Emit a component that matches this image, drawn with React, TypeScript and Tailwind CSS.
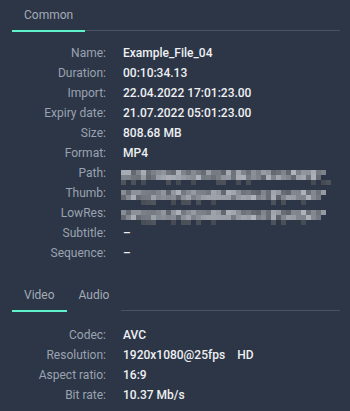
import React from 'react'

// pseudo-blurred path strings, drawn as pixel blocks
function Pixelated({ seed, width = 210 }: { seed: number; width?: number }) {
  const cells: React.ReactElement[] = []
  let s = seed
  const rand = () => {
    s = (s * 9301 + 49297) % 233280
    return s / 233280
  }
  const cols = Math.floor(width / 5)
  for (let r = 0; r < 3; r++) {
    for (let c = 0; c < cols; c++) {
      const v = rand()
      if (r === 2 && v > 0.18) continue
      const shade = r === 2 ? 70 + Math.floor(v * 60) : 95 + Math.floor(v * 80)
      const cut = c > cols - 3 && rand() > 0.5
      if (cut) continue
      cells.push(
        <rect
          key={r + '-' + c}
          x={c * 5}
          y={r * 5}
          width={5}
          height={5}
          fill={`rgb(${shade},${shade + 4},${shade + 12})`}
        />
      )
    }
  }
  return (
    <svg width={width} height={15} className="block" shapeRendering="crispEdges">
      {cells}
    </svg>
  )
}

interface Row {
  label: string
  value?: React.ReactNode
}

function Rows({ rows }: { rows: Row[] }) {
  return (
    <div className="flex flex-col">
      {rows.map((row) => (
        <div key={row.label} className="flex h-5 items-center">
          <div className="w-[106px] text-right text-[12px] text-[#9aa3b1]">{row.label}</div>
          <div className="ml-[17px] text-[12px] font-medium text-[#eef0f3]">{row.value}</div>
        </div>
      ))}
    </div>
  )
}

function Tabs({ tabs, active }: { tabs: string[]; active: number }) {
  return (
    <div className="flex pl-3 pr-[10px]">
      {tabs.map((t, i) => (
        <div
          key={t}
          className={
            'flex h-8 items-center px-3 pb-[1px] text-[12px] text-[#a3abb7] border-b-2 ' +
            (i === active ? 'border-[#5ef2ca]' : 'border-transparent')
          }
        >
          {t}
        </div>
      ))}
      <div className="flex-1 border-b border-[#4a5362] mb-[1px]" />
    </div>
  )
}

export default function App() {
  const common: Row[] = [
    { label: 'Name:', value: 'Example_File_04' },
    { label: 'Duration:', value: '00:10:34.13' },
    { label: 'Import:', value: '22.04.2022 17:01:23.00' },
    { label: 'Expiry date:', value: '21.07.2022 05:01:23.00' },
    { label: 'Size:', value: '808.68 MB' },
    { label: 'Format:', value: 'MP4' },
    { label: 'Path:', value: <div className="-ml-[2px] mt-[8px]"><Pixelated seed={17} width={210} /></div> },
    { label: 'Thumb:', value: <div className="-ml-[2px] mt-[8px]"><Pixelated seed={83} width={205} /></div> },
    { label: 'LowRes:', value: <div className="-ml-[2px] mt-[8px]"><Pixelated seed={83} width={205} /></div> },
    { label: 'Subtitle:', value: '–' },
    { label: 'Sequence:', value: '–' },
  ]
  const video: Row[] = [
    { label: 'Codec:', value: 'AVC' },
    {
      label: 'Resolution:',
      value: (
        <span className="flex gap-3">
          <span>1920x1080@25fps</span>
          <span>HD</span>
        </span>
      ),
    },
    { label: 'Aspect ratio:', value: '16:9' },
    { label: 'Bit rate:', value: '10.37 Mb/s' },
  ]
  return (
    <div
      className="h-[411px] w-[350px] overflow-hidden bg-[#2d3646]"
      style={{ fontFamily: 'Roboto, "Liberation Sans", sans-serif' }}
    >
      <Tabs tabs={['Common']} active={0} />
      <div className="pt-[11px]">
        <Rows rows={common} />
      </div>
      <div className="mt-[17px]">
        <Tabs tabs={['Video', 'Audio']} active={0} />
      </div>
      <div className="pt-[13px]">
        <Rows rows={video} />
      </div>
    </div>
  )
}
